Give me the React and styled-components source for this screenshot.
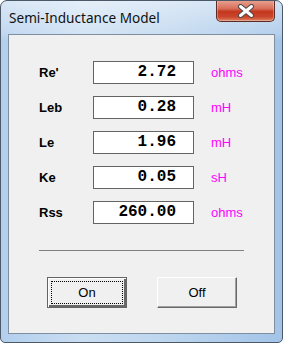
import React from 'react';
import styled, { createGlobalStyle } from 'styled-components';

const Global = createGlobalStyle`
	html, body {
		margin: 0;
		padding: 0;
		background: #ffffff;
	}
	body {
		width: 283px;
		height: 343px;
		overflow: hidden;
	}
`;

const params = [
	{ label: "Re'", value: '2.72', unit: 'ohms' },
	{ label: 'Leb', value: '0.28', unit: 'mH' },
	{ label: 'Le', value: '1.96', unit: 'mH' },
	{ label: 'Ke', value: '0.05', unit: 'sH' },
	{ label: 'Rss', value: '260.00', unit: 'ohms' },
];

const App = () => {
	return (
		<>
			<Global />
			<Window>
				<TitleBar>
					<Title>Semi-Inductance Model</Title>
					<CloseButton aria-label='close'>
						<svg width='18' height='14' viewBox='0 0 18 14'>
							<path
								d='M3.5 2.5 L14.5 11.5 M14.5 2.5 L3.5 11.5'
								stroke='#4a4a4a'
								strokeWidth='5'
								strokeLinecap='round'
							/>
							<path
								d='M3.5 2.5 L14.5 11.5 M14.5 2.5 L3.5 11.5'
								stroke='#ffffff'
								strokeWidth='3'
								strokeLinecap='round'
							/>
						</svg>
					</CloseButton>
				</TitleBar>
				<Client>
					<Fields>
						{params.map((p) => (
							<Row key={p.label}>
								<Label>{p.label}</Label>
								<Field>{p.value}</Field>
								<Unit>{p.unit}</Unit>
							</Row>
						))}
					</Fields>
					<Separator />
					<Buttons>
						<Button $default>On</Button>
						<Button>Off</Button>
					</Buttons>
				</Client>
			</Window>
		</>
	);
};

export default App;

const Window = styled.div`
	box-sizing: border-box;
	width: 283px;
	height: 343px;
	border: 1px solid #4a5868;
	border-radius: 7px 7px 5px 5px;
	background: linear-gradient(
			180deg,
			rgba(255, 255, 255, 0.5) 0px,
			rgba(255, 255, 255, 0.2) 32px,
			rgba(255, 255, 255, 0) 40px
		),
		linear-gradient(90deg, #b3cfed 0%, #cadef2 30%, #bcd5ee 60%, #a3c4e8 100%);
	display: flex;
	flex-direction: column;
	overflow: hidden;
`;

const TitleBar = styled.div`
	height: 33px;
	display: flex;
	justify-content: space-between;
	align-items: flex-start;
	padding-left: 8px;
	padding-right: 7px;
`;

const Title = styled.div`
	margin-top: 8px;
	font-family: 'Noto Sans', 'Open Sans', sans-serif;
	font-size: 13.6px;
	line-height: 18px;
	color: #111;
`;

const CloseButton = styled.div`
	box-sizing: border-box;
	width: 59px;
	height: 22px;
	margin-top: -1px;
	border: 1px solid #5a2c25;
	border-top: none;
	border-radius: 0 0 5px 5px;
	background: linear-gradient(
		180deg,
		#e9a493 0%,
		#d8705c 40%,
		#c4381f 55%,
		#c9452c 80%,
		#df8463 100%
	);
	box-shadow: inset 0 0 0 1px rgba(255, 255, 255, 0.3);
	display: flex;
	align-items: center;
	justify-content: center;
`;

const Client = styled.div`
	box-sizing: border-box;
	margin: 0 7px 8px 7px;
	flex: 1;
	background: #f0f0f0;
	border: 1px solid #7f8ea0;
	display: flex;
	flex-direction: column;
	padding: 26px 0 0 30px;
`;

const Fields = styled.div`
	display: flex;
	flex-direction: column;
	gap: 12px;
`;

const Row = styled.div`
	display: grid;
	grid-template-columns: 54px 101px auto;
	align-items: center;
	height: 23px;
`;

const Label = styled.div`
	font-family: 'Liberation Sans', Arial, sans-serif;
	font-weight: bold;
	font-size: 13px;
	color: #000;
`;

const Field = styled.div`
	box-sizing: border-box;
	height: 23px;
	background: #fff;
	border: 1px solid #646464;
	padding-right: 17px;
	text-align: right;
	font-family: 'Liberation Mono', 'Courier New', monospace;
	font-weight: bold;
	font-size: 16px;
	line-height: 21px;
	color: #000;
`;

const Unit = styled.div`
	margin-left: 17px;
	font-family: 'Liberation Sans', Arial, sans-serif;
	font-size: 13px;
	color: #ff00ff;
`;

const Separator = styled.div`
	width: 205px;
	height: 1px;
	background: #808080;
	margin-top: 26px;
`;

const Buttons = styled.div`
	display: flex;
	gap: 30px;
	margin-top: 26px;
	margin-left: 8px;
`;

const Button = styled.button`
	box-sizing: border-box;
	width: 80px;
	height: 31px;
	padding: 0;
	background: #f0f0f0;
	font-family: 'Liberation Sans', Arial, sans-serif;
	font-size: 13px;
	color: #000;
	border: 1px solid;
	border-color: ${(p) =>
		p.$default ? '#646464' : '#ffffff #696969 #696969 #ffffff'};
	box-shadow: ${(p) =>
		p.$default
			? 'inset 1px 1px #ffffff, inset -2px -2px #696969'
			: 'inset -1px -1px #a0a0a0'};
	outline: ${(p) => (p.$default ? '1px dotted #000' : 'none')};
	outline-offset: -5px;
`;
